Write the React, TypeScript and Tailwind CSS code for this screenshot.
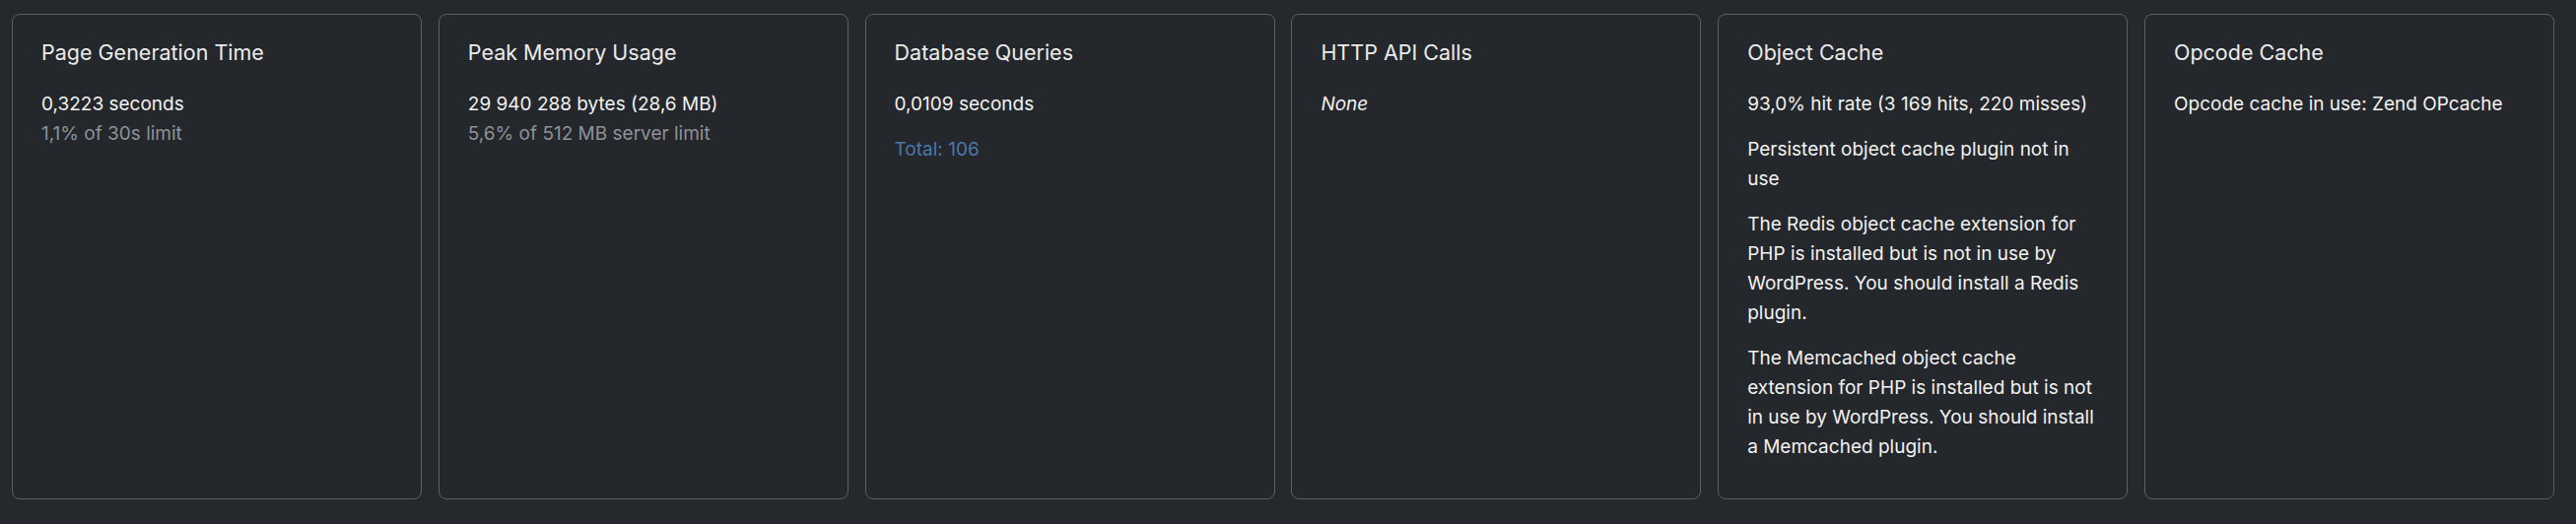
import type { ReactNode } from 'react'

interface PanelProps {
  title: string
  children: ReactNode
}

function Panel({ title, children }: PanelProps) {
  return (
    <section className="flex flex-col rounded-[8px] border border-[#5b6067] bg-[#24272b] pl-[29px] pr-[24px] pt-[23px]">
      <h3 className="text-[21.5px] leading-[30px] font-normal text-[#ebebeb]">{title}</h3>
      <div className="mt-[23px] flex flex-col gap-[16px] text-[19px] leading-[30px] text-[#f2f2f2]">
        {children}
      </div>
    </section>
  )
}

export default function App() {
  return (
    <div
      className="min-h-[532px] w-[2614px] bg-[#25282d] pl-[12px] pr-[22px] pt-[14px]"
      style={{ fontFamily: 'Inter, "Noto Sans", sans-serif' }}
    >
      <div className="grid h-[493px] grid-cols-6 gap-[16.8px]">
        <Panel title="Page Generation Time">
          <p>
            0,3223 seconds
            <br />
            <span className="text-[#8e9298]">1,1% of 30s limit</span>
          </p>
        </Panel>
        <Panel title="Peak Memory Usage">
          <p>
            29 940 288 bytes (28,6 MB)
            <br />
            <span className="text-[#8e9298]">5,6% of 512 MB server limit</span>
          </p>
        </Panel>
        <Panel title="Database Queries">
          <p>0,0109 seconds</p>
          <p className="text-[#4b78ae]">Total: 106</p>
        </Panel>
        <Panel title="HTTP API Calls">
          <p className="italic">None</p>
        </Panel>
        <Panel title="Object Cache">
          <p>93,0% hit rate (3 169 hits, 220 misses)</p>
          <p>Persistent object cache plugin not in use</p>
          <p>
            The Redis object cache extension for PHP is installed but is not in use by WordPress. You should
            install a Redis plugin.
          </p>
          <p>
            The Memcached object cache extension for PHP is installed but is not in use by WordPress. You
            should install a Memcached plugin.
          </p>
        </Panel>
        <Panel title="Opcode Cache">
          <p>Opcode cache in use: Zend OPcache</p>
        </Panel>
      </div>
    </div>
  )
}
